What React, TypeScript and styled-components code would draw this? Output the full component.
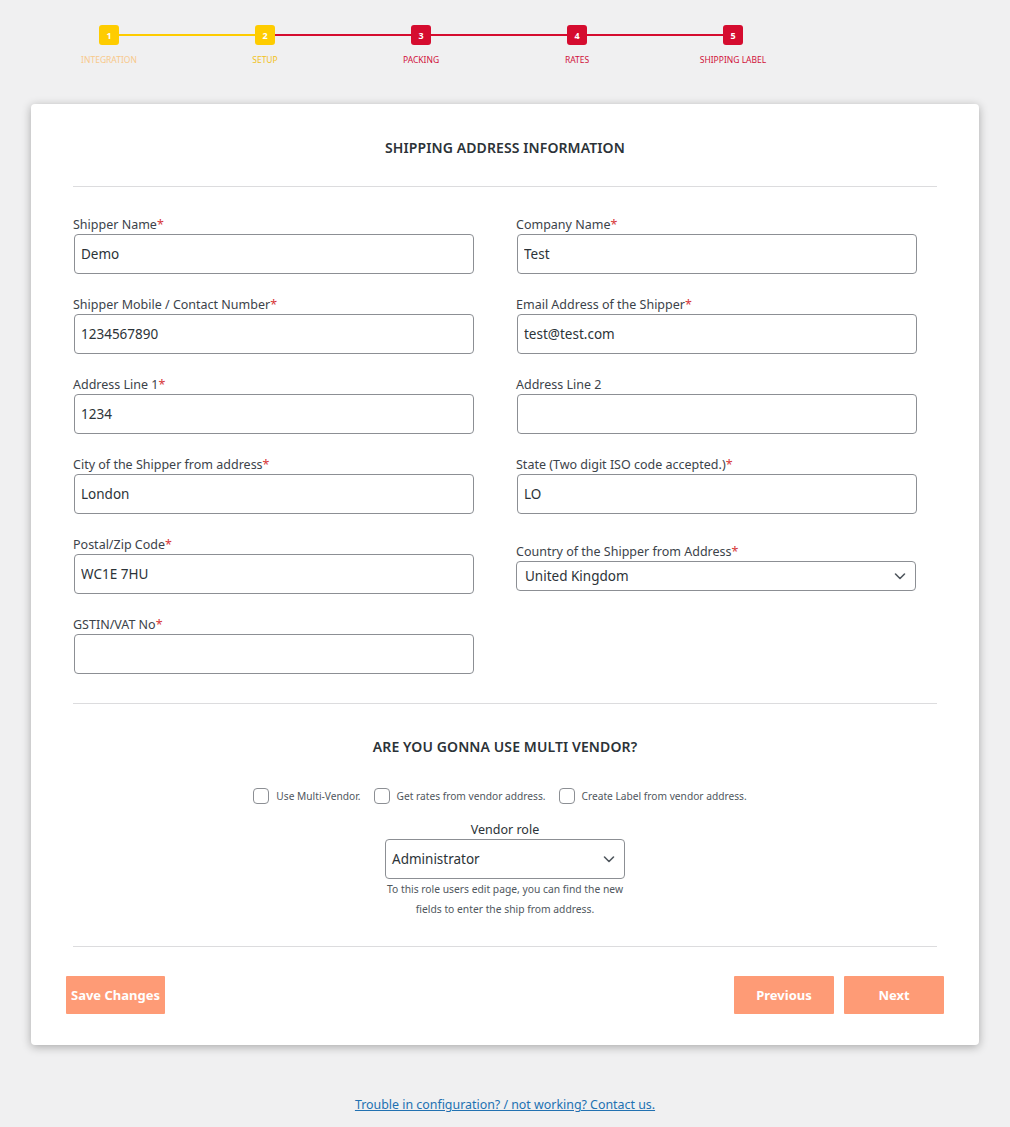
import React from "react";
import styled, { createGlobalStyle } from "styled-components";

const Global = createGlobalStyle`
  html, body { margin: 0; padding: 0; background: #f0f0f1; }
  body { font-family: "Noto Sans", "Open Sans", sans-serif; color: #3c434a; }
  * { box-sizing: border-box; }
`;

const YELLOW = "#fecc00";
const RED = "#d50c2f";

const Page = styled.div`
  padding: 25px 31px 14px 31px;
  display: flex;
  flex-direction: column;
`;

const Stepper = styled.div`
  display: grid;
  grid-template-columns: repeat(5, 156px);
  width: 780px;
`;

const Step = styled.div<{ $left?: string; $right?: string }>`
  position: relative;
  display: flex;
  flex-direction: column;
  align-items: center;
  &::before, &::after {
    content: "";
    position: absolute;
    top: 9px;
    height: 2px;
  }
  &::before {
    left: 0;
    right: 50%;
    background: ${(p) => p.$left || "transparent"};
  }
  &::after {
    left: 50%;
    right: 0;
    background: ${(p) => p.$right || "transparent"};
  }
`;

const StepBox = styled.div<{ $color: string }>`
  position: relative;
  z-index: 1;
  width: 20px;
  height: 20px;
  border-radius: 3px;
  background: ${(p) => p.$color};
  color: #fff;
  font-size: 9px;
  font-weight: 700;
  display: flex;
  align-items: center;
  justify-content: center;
`;

const StepLabel = styled.div<{ $color: string }>`
  margin-top: 9px;
  font-size: 8.5px;
  line-height: 12px;
  text-transform: uppercase;
  color: ${(p) => p.$color};
  white-space: nowrap;
`;

const Card = styled.div`
  margin-top: 38px;
  width: 948px;
  background: #fff;
  border-radius: 4px;
  box-shadow: 0 2px 10px rgba(0, 0, 0, 0.3);
  padding: 34px 35px 31px 35px;
  display: flex;
  flex-direction: column;
`;

const Inner = styled.div`
  padding: 0 7px;
  display: flex;
  flex-direction: column;
`;

const Title = styled.h2<{ $top?: number }>`
  margin: ${(p) => p.$top || 0}px 0 0 0;
  text-align: center;
  font-size: 14px;
  line-height: 20px;
  font-weight: 600;
  color: #2c3338;
  letter-spacing: 0.1px;
`;

const Rule = styled.hr<{ $top: number }>`
  border: 0;
  border-top: 1px solid #dcdcde;
  margin: ${(p) => p.$top}px 0 0 0;
`;

const FormGrid = styled.div`
  margin-top: 29px;
  display: grid;
  grid-template-columns: 443px 421px;
  row-gap: 22px;
`;

const Field = styled.div<{ $offset?: number }>`
  display: flex;
  flex-direction: column;
  padding-top: ${(p) => p.$offset || 0}px;
`;

const Label = styled.label`
  font-size: 12.5px;
  line-height: 18px;
  color: #3c434a;
`;

const Req = styled.span`
  color: #d63638;
`;

const Input = styled.input`
  margin-left: 1px;
  width: 400px;
  height: 40px;
  border: 1px solid #8c8f94;
  border-radius: 4px;
  padding: 0 6px;
  font-family: inherit;
  font-size: 13.5px;
  color: #2c3338;
  background: #fff;
  outline: none;
`;

const SelectWrap = styled.div<{ $w: number; $h: number; $pad: number }>`
  position: relative;
  width: ${(p) => p.$w}px;
  height: ${(p) => p.$h}px;
  border: 1px solid #8c8f94;
  border-radius: 4px;
  background: #fff;
  display: flex;
  align-items: center;
  padding: 0 ${(p) => p.$pad}px;
  font-size: 13.5px;
  color: #2c3338;
  svg {
    position: absolute;
    right: 7px;
    top: 50%;
    margin-top: -8px;
  }
`;

const Center = styled.div`
  display: flex;
  flex-direction: column;
  align-items: center;
`;

const CheckRow = styled.div`
  margin-top: 31px;
  display: flex;
  justify-content: center;
  align-items: center;
  gap: 13px;
  padding-right: 10px;
`;

const CheckItem = styled.label`
  display: flex;
  align-items: center;
  gap: 7px;
  font-size: 10.2px;
  color: #50575e;
`;

const Box = styled.span`
  width: 16px;
  height: 16px;
  border: 1px solid #8c8f94;
  border-radius: 4px;
  background: #fff;
`;

const VendorLabel = styled.div`
  margin-top: 17px;
  font-size: 12.5px;
  line-height: 18px;
  color: #2c3338;
`;

const Help = styled.p`
  margin: 0;
  font-size: 10.3px;
  line-height: 20px;
  text-align: center;
  color: #50575e;
`;

const Buttons = styled.div`
  margin-top: 29px;
  display: flex;
  justify-content: space-between;
  align-items: center;
`;

const Group = styled.div`
  display: flex;
  gap: 10px;
`;

const Btn = styled.button<{ $w: number }>`
  width: ${(p) => p.$w}px;
  height: 38px;
  border: 0;
  border-radius: 1px;
  background: #fe9b76;
  color: #fff;
  font-family: inherit;
  font-weight: 700;
  font-size: 13px;
  padding: 0;
  cursor: pointer;
`;

const Footer = styled.div`
  margin-top: 47px;
  text-align: center;
  width: 948px;
`;

const Link = styled.a`
  font-size: 12.4px;
  line-height: 18px;
  color: #2271b1;
  text-decoration: underline;
`;

const Chevron = () => (
  <svg width="16" height="16" viewBox="0 0 16 16" fill="none">
    <path d="M3.5 6l4.5 4.5L12.5 6" stroke="#50575e" strokeWidth="1.6" strokeLinecap="round" strokeLinejoin="round" />
  </svg>
);

const steps = [
  { n: 1, label: "Integration", color: YELLOW, text: "#f8c98b", right: YELLOW },
  { n: 2, label: "Setup", color: YELLOW, text: "#f2c21b", left: YELLOW, right: RED },
  { n: 3, label: "Packing", color: RED, text: "#d0103a", left: RED, right: RED },
  { n: 4, label: "Rates", color: RED, text: "#d0103a", left: RED, right: RED },
  { n: 5, label: "Shipping Label", color: RED, text: "#d0103a", left: RED },
];

const fields: { label: string; req: boolean; value: string }[] = [
  { label: "Shipper Name", req: true, value: "Demo" },
  { label: "Company Name", req: true, value: "Test" },
  { label: "Shipper Mobile / Contact Number", req: true, value: "1234567890" },
  { label: "Email Address of the Shipper", req: true, value: "test@test.com" },
  { label: "Address Line 1", req: true, value: "1234" },
  { label: "Address Line 2", req: false, value: "" },
  { label: "City of the Shipper from address", req: true, value: "London" },
  { label: "State (Two digit ISO code accepted.)", req: true, value: "LO" },
  { label: "Postal/Zip Code", req: true, value: "WC1E 7HU" },
];

export default function App() {
  return (
    <>
      <Global />
      <Page>
        <Stepper>
          {steps.map((s) => (
            <Step key={s.n} $left={s.left} $right={s.right}>
              <StepBox $color={s.color}>{s.n}</StepBox>
              <StepLabel $color={s.text}>{s.label}</StepLabel>
            </Step>
          ))}
        </Stepper>

        <Card>
          <Inner>
            <Title>SHIPPING ADDRESS INFORMATION</Title>
            <Rule $top={28} />
            <FormGrid>
              {fields.map((f) => (
                <Field key={f.label}>
                  <Label>
                    {f.label}
                    {f.req && <Req>*</Req>}
                  </Label>
                  <Input defaultValue={f.value} />
                </Field>
              ))}
              <Field $offset={7}>
                <Label>
                  Country of the Shipper from Address<Req>*</Req>
                </Label>
                <SelectWrap $w={400} $h={30} $pad={8}>
                  United Kingdom
                  <Chevron />
                </SelectWrap>
              </Field>
              <Field>
                <Label>
                  GSTIN/VAT No<Req>*</Req>
                </Label>
                <Input defaultValue="" />
              </Field>
            </FormGrid>
            <Rule $top={29} />
            <Title $top={33}>ARE YOU GONNA USE MULTI VENDOR?</Title>
            <CheckRow>
              <CheckItem>
                <Box />
                Use Multi-Vendor.
              </CheckItem>
              <CheckItem>
                <Box />
                Get rates from vendor address.
              </CheckItem>
              <CheckItem>
                <Box />
                Create Label from vendor address.
              </CheckItem>
            </CheckRow>
            <Center>
              <VendorLabel>Vendor role</VendorLabel>
              <SelectWrap $w={240} $h={40} $pad={6}>
                Administrator
                <Chevron />
              </SelectWrap>
              <Help>
                To this role users edit page, you can find the new
                <br />
                fields to enter the ship from address.
              </Help>
            </Center>
            <Rule $top={27} />
          </Inner>
          <Buttons>
            <Btn $w={99}>Save Changes</Btn>
            <Group>
              <Btn $w={100}>Previous</Btn>
              <Btn $w={100}>Next</Btn>
            </Group>
          </Buttons>
        </Card>

        <Footer>
          <Link href="#">Trouble in configuration? / not working? Contact us.</Link>
        </Footer>
      </Page>
    </>
  );
}
